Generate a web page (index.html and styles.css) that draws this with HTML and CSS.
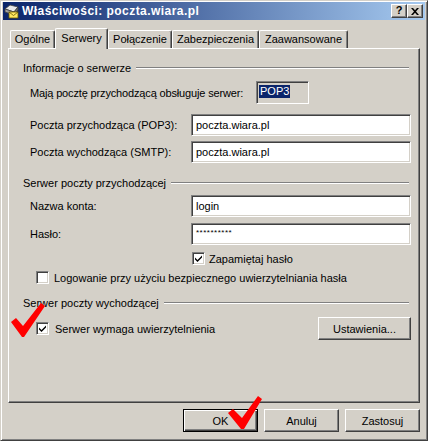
FILE: index.html
```html
<!DOCTYPE html>
<html>
<head>
<meta charset="utf-8">
<link rel="stylesheet" href="styles.css">
</head>
<body>
<div class="window">
  <div class="titlebar">
    <svg class="appicon" width="16" height="16" viewBox="0 0 16 16">
      <polygon points="1,6 6,2 14,4 10,9" fill="#e8e8e8" stroke="#404040" stroke-width="0.8"/>
      <polygon points="1,6 10,9 10,12 1,9" fill="#a0a0a0" stroke="#404040" stroke-width="0.8"/>
      <polygon points="10,9 14,4 14,7 10,12" fill="#707070" stroke="#404040" stroke-width="0.8"/>
      <rect x="5" y="9" width="9" height="6" fill="#ffe860" stroke="#6a5a00" stroke-width="0.8"/>
      <polyline points="5,9 9.5,12.5 14,9" fill="none" stroke="#6a5a00" stroke-width="0.8"/>
    </svg>
    <span class="title">Właściwości: poczta.wiara.pl</span>
    <div class="tbtns">
      <span class="tbtn help">?</span>
      <span class="tbtn close"><svg width="8" height="7" viewBox="0 0 8 7"><path d="M0 0h2l2 2.2L6 0h2L5 3.5 8 7H6L4 4.8 2 7H0l3-3.5z" fill="#000"/></svg></span>
    </div>
  </div>

  <div class="content">
    <div class="tabs">
      <div class="tab w1">Ogólne</div>
      <div class="tab w2 selected">Serwery</div>
      <div class="tab w3">Połączenie</div>
      <div class="tab w4">Zabezpieczenia</div>
      <div class="tab w5">Zaawansowane</div>
    </div>

    <div class="panel">
      <div class="heading"><span>Informacje o serwerze</span><span class="line"></span></div>
      <div class="row r-maja">
        <span class="label wide">Mają pocztę przychodzącą obsługuje serwer:</span>
        <span class="protobox"><span class="hl">POP3</span></span>
      </div>
      <div class="row r-pop">
        <span class="label">Poczta przychodząca (POP3):</span>
        <span class="input">poczta.wiara.pl</span>
      </div>
      <div class="row r-smtp">
        <span class="label">Poczta wychodząca (SMTP):</span>
        <span class="input">poczta.wiara.pl</span>
      </div>

      <div class="heading h2"><span>Serwer poczty przychodzącej</span><span class="line"></span></div>
      <div class="row r-login">
        <span class="label">Nazwa konta:</span>
        <span class="input">login</span>
      </div>
      <div class="row r-pass">
        <span class="label">Hasło:</span>
        <span class="input pass">**********</span>
      </div>
      <div class="cbrow r-remember">
        <span class="cb"><svg width="7" height="7" viewBox="0 0 7 7"><path d="M0 2.5l2.5 2.5L7 0.5v2L2.5 7 0 4.5z" fill="#000"/></svg></span>
        <span class="cbtext">Zapamiętaj hasło</span>
      </div>
      <div class="cbrow r-spa">
        <span class="cb"></span>
        <span class="cbtext">Logowanie przy użyciu bezpiecznego uwierzytelniania hasła</span>
      </div>

      <div class="heading h3"><span>Serwer poczty wychodzącej</span><span class="line"></span></div>
      <div class="row r-auth">
        <span class="cb"><svg width="7" height="7" viewBox="0 0 7 7"><path d="M0 2.5l2.5 2.5L7 0.5v2L2.5 7 0 4.5z" fill="#000"/></svg></span>
        <span class="cbtext">Serwer wymaga uwierzytelnienia</span>
        <span class="btn settings">Ustawienia...</span>
      </div>
    </div>

    <div class="buttons">
      <span class="btn default">OK</span>
      <span class="btn">Anuluj</span>
      <span class="btn">Zastosuj</span>
    </div>
  </div>

  <svg class="marks" width="428" height="441" viewBox="0 0 428 441">
    <polygon points="11,322 16,318 23,326 41,303 45,306 24,337 22,337" fill="#ff0000"/>
    <polygon points="228,413 233,409 242,418 258,396 262,399 244,429 241,429" fill="#ff0000"/>
  </svg>
</div>
</body>
</html>
```

FILE: styles.css
```css
body {
  margin: 0;
  font-family: "Liberation Sans", Arial, sans-serif;
  font-size: 11px;
  color: #000;
  background: #D4D0C8;
}

.window {
  position: relative;
  width: 428px;
  height: 441px;
  box-sizing: border-box;
  background: #D4D0C8;
  border: 1px solid;
  border-color: #D4D0C8 #404040 #404040 #D4D0C8;
  box-shadow: inset 1px 1px #ffffff, inset -1px -1px #808080;
  padding: 1px 2px 0 2px;
}

.titlebar {
  height: 18px;
  display: flex;
  align-items: center;
  padding-left: 1px;
  padding-right: 2px;
  background: linear-gradient(to right, #0A246A, #A6CAF0);
}

.appicon { flex: none; margin-right: 2px; }

.title {
  color: #fff;
  font-weight: bold;
  font-size: 12px;
  letter-spacing: 0.45px;
  white-space: nowrap;
}

.tbtns {
  margin-left: auto;
  display: flex;
}

.tbtn {
  width: 16px;
  height: 14px;
  box-sizing: border-box;
  background: #D4D0C8;
  border: 1px solid;
  border-color: #ffffff #404040 #404040 #ffffff;
  box-shadow: inset -1px -1px #808080;
  display: flex;
  align-items: center;
  justify-content: center;
  font-weight: bold;
  font-size: 11px;
  line-height: 11px;
}

.tbtn.help { padding-bottom: 1px; }

.content {
  padding: 8px 0 0 5px;
}

.tabs {
  height: 20px;
  display: flex;
  align-items: flex-start;
  padding-left: 2px;
}

.tab {
  height: 18px;
  margin-top: 2px;
  box-sizing: border-box;
  border-top: 1px solid #fff;
  border-left: 1px solid #fff;
  border-right: 1px solid #404040;
  box-shadow: inset -1px 0 #808080;
  border-radius: 2px 2px 0 0;
  text-align: center;
  line-height: 17px;
  background: #D4D0C8;
  white-space: nowrap;
}

.tab.w1 { width: 45px; }
.tab.w2 { width: 53px; }
.tab.w3 { width: 64px; }
.tab.w4 { width: 87px; }
.tab.w5 { width: 89px; }

.tab.selected {
  position: relative;
  z-index: 1;
  height: 21px;
  margin-top: 0;
  line-height: 19px;
}

.panel {
  width: 412px;
  height: 355px;
  box-sizing: border-box;
  border-top: 1px solid #fff;
  border-left: 1px solid #fff;
  border-right: 1px solid #404040;
  border-bottom: 1px solid #404040;
  box-shadow: inset -1px -1px #808080;
  padding: 12px 8px 0 14px;
}

.heading {
  height: 14px;
  display: flex;
  align-items: center;
  white-space: nowrap;
}

.heading .line {
  flex: 1;
  height: 0;
  border-top: 1px solid #808080;
  border-bottom: 1px solid #ffffff;
  margin-left: 5px;
  margin-right: 2px;
}

.heading.h2 { margin-top: 13px; }
.heading.h3 { margin-top: 12px; }

.row {
  display: flex;
  align-items: center;
  height: 22px;
  padding-left: 7px;
}

.r-maja { margin-top: 6px; height: 23px; }
.r-pop { margin-top: 10px; }
.r-smtp { margin-top: 5px; }
.r-login { margin-top: 5px; }
.r-pass { margin-top: 6px; }

.label {
  width: 161px;
  flex: none;
  white-space: nowrap;
}

.label.wide { width: 226px; letter-spacing: -0.15px; }

.protobox {
  width: 53px;
  height: 23px;
  box-sizing: border-box;
  border: 1px solid;
  border-color: #808080 #ffffff #ffffff #808080;
  box-shadow: inset 1px 1px #404040, inset -1px -1px #D4D0C8;
  padding: 3px 0 0 2px;
  display: flex;
  align-items: flex-start;
}

.hl {
  background: #0A246A;
  color: #fff;
  padding: 0 1px;
  line-height: 13px;
}

.input {
  width: 220px;
  height: 22px;
  box-sizing: border-box;
  background: #fff;
  border: 1px solid;
  border-color: #808080 #ffffff #ffffff #808080;
  box-shadow: inset 1px 1px #404040, inset -1px -1px #D4D0C8;
  padding: 0 4px;
  display: flex;
  align-items: center;
  white-space: nowrap;
}

.input.pass {
  font-size: 8px;
  letter-spacing: 0.5px;
  align-items: flex-start;
  padding-top: 4px;
}

.cbrow {
  display: flex;
  align-items: center;
  height: 13px;
}

.r-remember { margin-top: 7px; padding-left: 169px; }
.r-spa { margin-top: 6px; padding-left: 13px; }

.cb {
  width: 13px;
  height: 13px;
  flex: none;
  box-sizing: border-box;
  background: #fff;
  border: 1px solid;
  border-color: #808080 #ffffff #ffffff #808080;
  box-shadow: inset 1px 1px #404040, inset -1px -1px #D4D0C8;
  display: flex;
  align-items: center;
  justify-content: center;
}

.cbtext {
  margin-left: 4px;
  white-space: nowrap;
}

.r-spa .cbtext { margin-left: 5px; }

.r-auth {
  margin-top: 7px;
  height: 23px;
  padding-left: 13px;
}

.r-auth .cbtext { margin-left: 6px; }

.btn {
  width: 75px;
  height: 23px;
  box-sizing: border-box;
  background: #D4D0C8;
  border: 1px solid;
  border-color: #ffffff #404040 #404040 #ffffff;
  box-shadow: inset -1px -1px #808080;
  display: flex;
  align-items: center;
  justify-content: center;
  white-space: nowrap;
}

.btn.settings {
  width: 93px;
  margin-left: auto;
}

.buttons {
  display: flex;
  justify-content: flex-end;
  gap: 6px;
  margin-top: 6px;
  padding-right: 5px;
}

.btn.default {
  border: 1px solid #000;
  box-shadow: inset 1px 1px #ffffff, inset -1px -1px #404040, inset -2px -2px #808080;
}

.marks {
  position: absolute;
  left: -1px;
  top: -1px;
  pointer-events: none;
}
```
